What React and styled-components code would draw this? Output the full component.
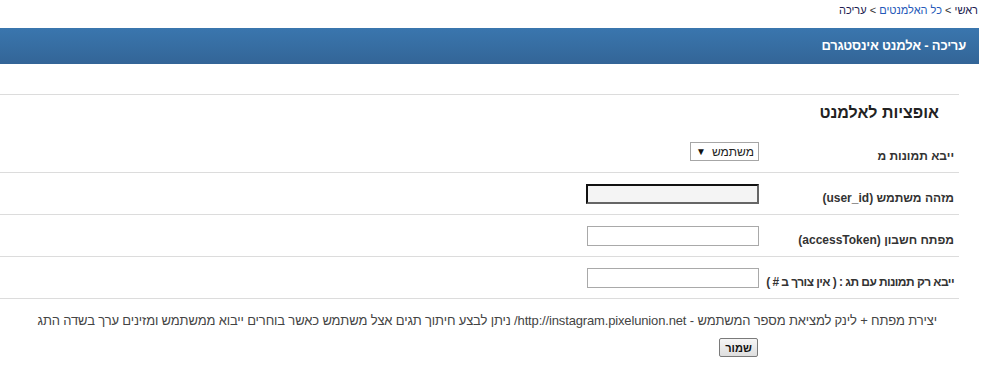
import React from "react";
import styled, { createGlobalStyle } from "styled-components";

const Global = createGlobalStyle`
  html, body { margin: 0; padding: 0; background: #fff; }
  body { font-family: "Liberation Sans", Arial, sans-serif; font-size: 12px; color: #333; }
`;

const Page = styled.div`
  direction: rtl;
  width: 979px;
`;

const Breadcrumb = styled.div`
  height: 20px;
  line-height: 20px;
  padding-right: 1px;
  font-size: 11px;
  color: #333;
`;

const Crumb = styled.a`
  color: ${(p) => (p.$active ? "#2458b8" : "#1c1c50")};
  text-decoration: none;
`;

const Current = styled.span`
  color: #1c1c50;
`;

const Header = styled.div`
  margin-top: 8px;
  height: 36px;
  line-height: 36px;
  padding-right: 13px;
  background: linear-gradient(to bottom, #3a76ae, #336597);
  color: #fff;
  font-weight: bold;
  font-size: 13px;
  letter-spacing: -0.2px;
`;

const Form = styled.div`
  margin: 30px 20px 0 0;
  border-top: 1px solid #dcdcdc;
`;

const Heading = styled.h2`
  margin: 0;
  height: 36px;
  padding: 6px 20px 0 0;
  box-sizing: border-box;
  font-size: 16px;
  line-height: 24px;
  font-weight: bold;
  color: #222;
`;

const Row = styled.div`
  display: grid;
  grid-template-columns: 200px 1fr;
  align-items: center;
  height: 42px;
  box-sizing: border-box;
  border-bottom: 1px solid #dcdcdc;
`;

const Label = styled.label`
  padding: 8px 5px 0 0;
  font-weight: bold;
  font-size: 12px;
  color: #333;
  white-space: nowrap;
  letter-spacing: ${(p) => (p.$tight ? "-0.55px" : "0")};
`;

const Field = styled.div`
  display: flex;
  justify-content: flex-start;
`;

const SelectBox = styled.div`
  display: flex;
  align-items: center;
  gap: 6px;
  height: 19px;
  box-sizing: border-box;
  padding: 0 4px 0 5px;
  border: 1px solid #a6a6a6;
  background: #fff;
  color: #222;
  font-size: 12px;
`;

const Arrow = styled.span`
  font-size: 10px;
  color: #111;
`;

const Input = styled.input`
  width: ${(p) => (p.$inset ? "173px" : "172px")};
  height: 20px;
  box-sizing: border-box;
  margin: 0;
  padding: 0 3px;
  font-family: inherit;
  font-size: 12px;
  background: ${(p) => (p.$inset ? "#f4f4f4" : "#fff")};
  border: ${(p) => (p.$inset ? "2px solid" : "1px solid #a9a9a9")};
  border-color: ${(p) => (p.$inset ? "#111 #666 #666 #111" : "#a9a9a9")};
  outline: none;
`;

const Note = styled.div`
  padding: 14px 22px 0 0;
  line-height: 16px;
  font-size: 13px;
  letter-spacing: -0.15px;
  color: #444;
  white-space: nowrap;
`;

const Actions = styled.div`
  display: flex;
  padding: 9px 201px 0 0;
`;

const Button = styled.button`
  width: 39px;
  height: 19px;
  padding: 0;
  font-family: inherit;
  font-size: 11px;
  font-weight: bold;
  color: #111;
  border: 1px solid #7a7a7a;
  border-radius: 2px;
  background: linear-gradient(to bottom, #f6f6f6, #dedede);
`;

export default function App() {
  return (
    <Page>
      <Global />
      <Breadcrumb>
        <Crumb href="#">ראשי</Crumb> &gt; <Crumb href="#" $active>כל האלמנטים</Crumb> &gt;{" "}
        <Current>עריכה</Current>
      </Breadcrumb>
      <Header>עריכה - אלמנט אינסטגרם</Header>
      <Form>
        <Heading>אופציות לאלמנט</Heading>
        <Row>
          <Label>ייבא תמונות מ</Label>
          <Field>
            <SelectBox>
              <span>משתמש</span>
              <Arrow>▼</Arrow>
            </SelectBox>
          </Field>
        </Row>
        <Row>
          <Label>מזהה משתמש (user_id)</Label>
          <Field>
            <Input $inset />
          </Field>
        </Row>
        <Row>
          <Label>מפתח חשבון (accessToken)</Label>
          <Field>
            <Input />
          </Field>
        </Row>
        <Row>
          <Label $tight>ייבא רק תמונות עם תג : ( אין צורך ב # )</Label>
          <Field>
            <Input />
          </Field>
        </Row>
        <Note>
          יצירת מפתח + לינק למציאת מספר המשתמש - http://instagram.pixelunion.net/ ניתן לבצע חיתוך תגים אצל משתמש כאשר בוחרים ייבוא ממשתמש ומזינים ערך בשדה התג
        </Note>
        <Actions>
          <Button>שמור</Button>
        </Actions>
      </Form>
    </Page>
  );
}
